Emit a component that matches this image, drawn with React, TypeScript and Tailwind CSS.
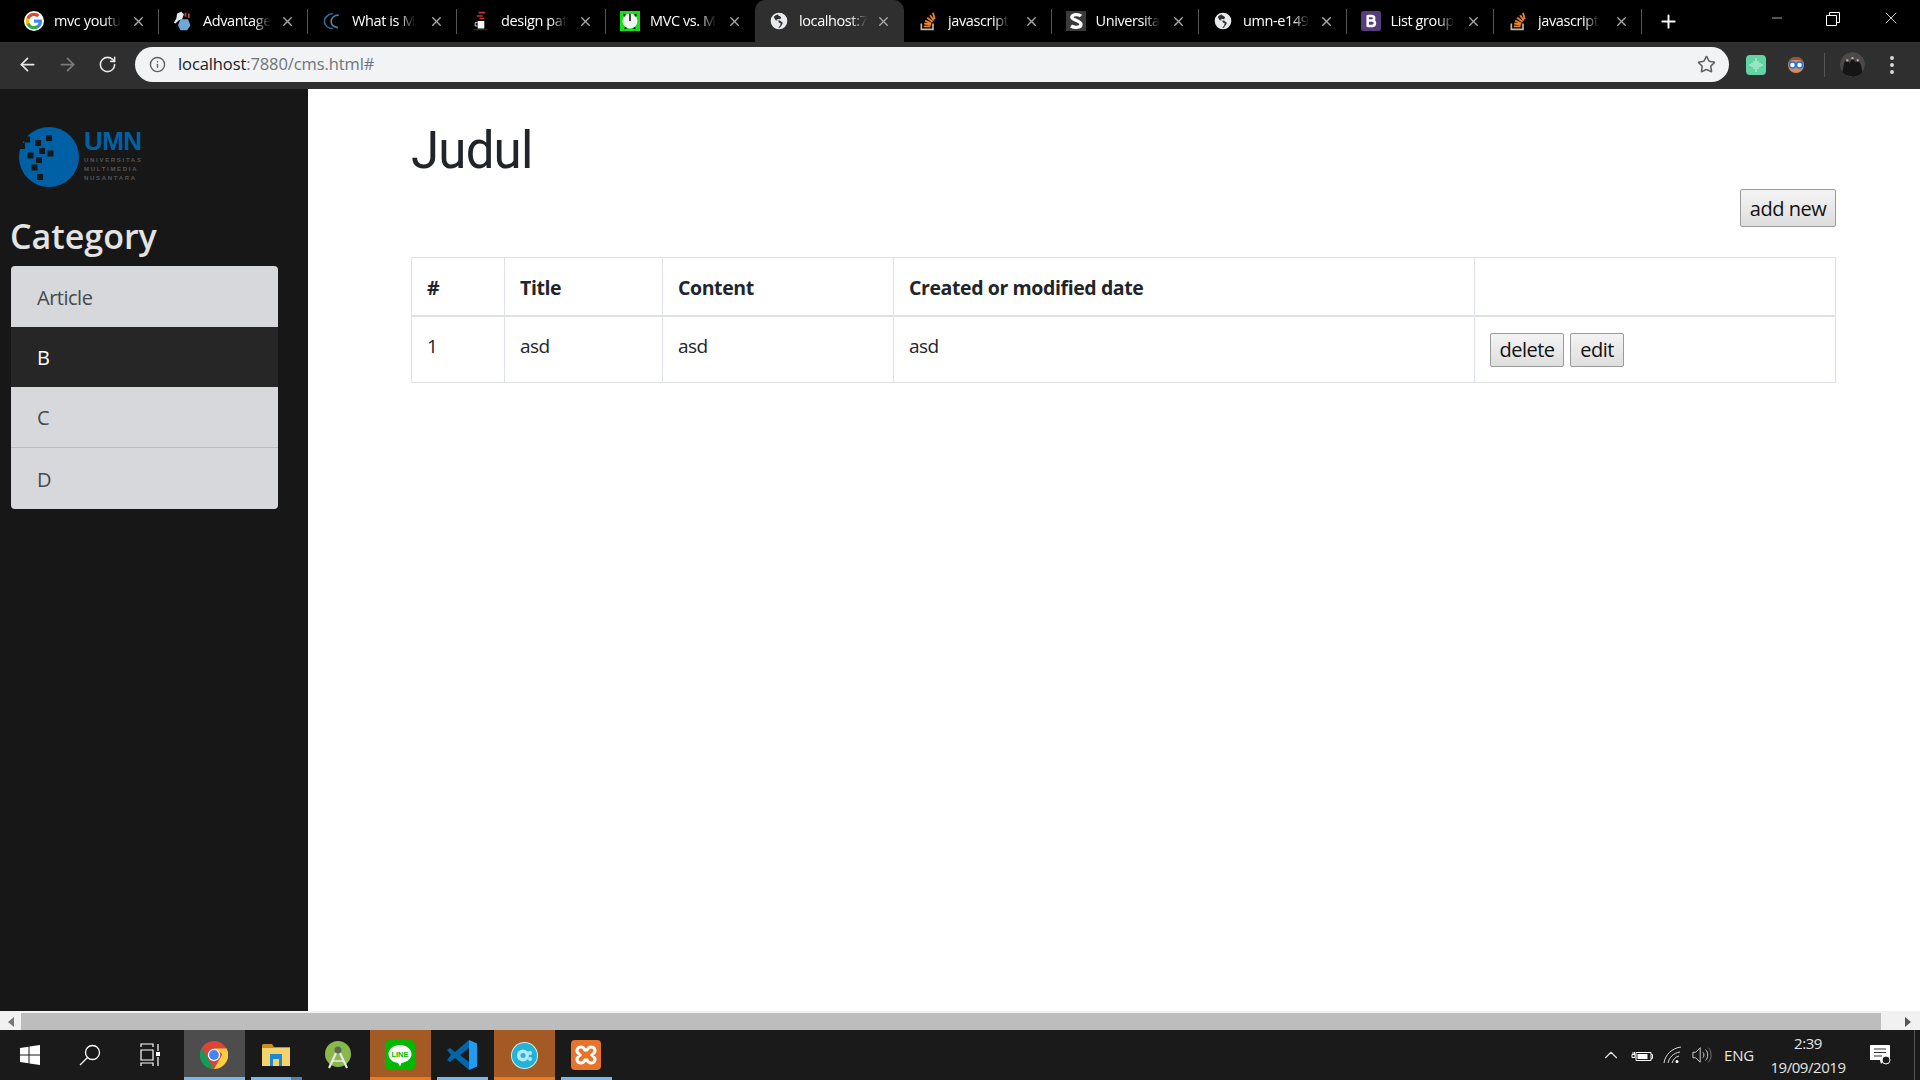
import { ArrowLeft, ArrowRight, ChevronUp, Info, Minus, Plus, RotateCw, Star, X } from "lucide-react";

const FONT = "font-['Open_Sans','Noto_Sans',sans-serif]";

function GoogleIcon() {
  return (
    <svg viewBox="0 0 24 24" className="w-5 h-5 rounded-full bg-white">
      <path fill="#4285F4" d="M21.6 12.2c0-.7-.1-1.4-.2-2H12v3.900h5.400c-.2 1.200-.9 2.300-2 3v2.500h3.200c1.900-1.800 3-4.400 3-7.400z" />
      <path fill="#34A853" d="M12 22c2.700 0 5-.9 6.600-2.400l-3.200-2.500c-.9.600-2 1-3.400 1-2.600 0-4.800-1.800-5.600-4.100H3.100v2.600C4.800 19.800 8.100 22 12 22z" />
      <path fill="#FBBC05" d="M6.400 14c-.2-.6-.3-1.300-.3-2s.1-1.400.3-2V7.400H3.100C2.400 8.800 2 10.300 2 12s.4 3.200 1.100 4.600L6.400 14z" />
      <path fill="#EA4335" d="M12 6c1.500 0 2.800.5 3.800 1.500l2.900-2.900C17 3 14.700 2 12 2 8.100 2 4.800 4.200 3.100 7.400L6.400 10C7.200 7.700 9.400 6 12 6z" />
    </svg>
  );
}

function AdvantageIcon() {
  return (
    <svg viewBox="0 0 24 24" className="w-5 h-5">
      <path fill="#dfe9f2" d="M5 3l5-2 3 3-2 6-4 1-4 4-2-1 3-5z" />
      <path fill="#6fa8d8" d="M9 10h9l3 7-4 6H9l-3-6z" />
      <path fill="#c9503f" d="M14 2h2v5h-2zM18 3h2v5h-2z" />
    </svg>
  );
}

function CrescentIcon() {
  return (
    <svg viewBox="0 0 24 24" className="w-5 h-5" fill="none" stroke="#3d6b94" strokeWidth="2">
      <path d="M13 3C6 4 2 9 3 14c1 4 5 7 10 7" />
      <path stroke="#5b7f9f" d="M20 5c-5 0-9 3-9 8 0 4 3 6 8 7" />
    </svg>
  );
}

function JavaIcon() {
  return (
    <svg viewBox="0 0 24 24" className="w-5 h-5">
      <path fill="#d0312d" d="M9 1h8v2H9zM7 5h7v2H7zM10 8h6v2h-6z" />
      <path fill="#f5f5f5" d="M8 12h8v9H8z" />
      <path fill="none" stroke="#f5f5f5" d="M8 14H5v4h3" />
      <path fill="#444" d="M3 22h17v1H3z" />
    </svg>
  );
}

function MvcIcon() {
  return (
    <svg viewBox="0 0 24 24" className="w-5 h-5 bg-[#16e016]">
      <circle cx="12" cy="12" r="9" fill="#f2f2f2" />
      <path fill="#222" d="M11 3h2v9h-2zM4 3l3 1-1 3-2-1zM20 3l-3 1 1 3 2-1zM6 19l3 2-4 1zM18 19l-3 2 4 1z" />
    </svg>
  );
}

function GlobeIcon() {
  return (
    <svg viewBox="0 0 24 24" className="w-5 h-5">
      <circle cx="12" cy="12" r="10" fill="#e8eaed" />
      <path fill="#2f2f2f" d="M11 4.200c-2 .2-4 1.300-5.300 3L8 11l3 .8 1 2.200 2 .5-.5 3-2.500 2.600h2c1.200-2 3.500-4 3.500-6.100l-3.500-2.500-3 .5-1-1.500 2-1 2.500.5 1-2.500c-.8-1-1.700-1.700-3.500-2.200z" />
    </svg>
  );
}

function StackIcon() {
  return (
    <svg viewBox="0 0 24 24" className="w-5 h-5" fill="none">
      <path stroke="#bcbbbb" strokeWidth="2" d="M4 15v7h14v-7" />
      <path stroke="#f48024" strokeWidth="2.200" d="M7 18.500h8M7.500 15l8 1.200M8.500 11.500l7.500 3.500M11 8l6.500 5M14.500 5l4.500 6.500M18 2l2 7.500" />
    </svg>
  );
}

function SIcon() {
  return (
    <svg viewBox="0 0 24 24" className="w-5 h-5 bg-[#3a3a3a]">
      <path fill="none" stroke="#fff" strokeWidth="4" d="M18 6c-2-2-10-3-11 1s11 4 11 9-9 4-12 2" />
    </svg>
  );
}

function BootstrapIcon() {
  return (
    <svg viewBox="0 0 24 24" className="w-5 h-5">
      <rect width="24" height="24" rx="3" fill="#563d7c" />
      <path fill="none" stroke="#fff" strokeWidth="3" d="M8 5v14M8 6h4.500c4.500 0 4.500 5.500 0 5.500H8M8 11.500h5c5 0 5 6.500 0 6.500H8" />
    </svg>
  );
}

const tabs = [
  { title: "mvc youtu", icon: <GoogleIcon /> },
  { title: "Advantage", icon: <AdvantageIcon /> },
  { title: "What is M", icon: <CrescentIcon /> },
  { title: "design pat", icon: <JavaIcon /> },
  { title: "MVC vs. M", icon: <MvcIcon /> },
  { title: "localhost:7", icon: <GlobeIcon />, active: true },
  { title: "javascript", icon: <StackIcon /> },
  { title: "Universita", icon: <SIcon /> },
  { title: "umn-e149", icon: <GlobeIcon /> },
  { title: "List group", icon: <BootstrapIcon /> },
  { title: "javascript", icon: <StackIcon /> },
];

function TabBar() {
  return (
    <div className="flex h-[42px] items-stretch bg-black pl-[10px] text-white">
      {tabs.map((tab, i) => (
        <div
          key={i}
          className={`relative flex shrink-0 items-center pl-[14px] pr-[13px] ${i < 6 ? "w-[149px]" : "w-[147.5px]"} ${
            tab.active ? "rounded-t-[10px] bg-[#2f2f2f]" : ""
          }`}
        >
          <span className="flex w-5 shrink-0 items-center justify-center">{tab.icon}</span>
          <span className="ml-[10px] whitespace-nowrap text-[14.5px] tracking-[-0.4px] [mask-image:linear-gradient(to_right,black_75%,transparent)]">
            {tab.title}
          </span>
          <X className="ml-auto h-[15px] w-[15px] text-[#a9a9a9]" strokeWidth={2.2} />
          {!tab.active && tabs[i + 1] && !tabs[i + 1].active && (
            <span className="absolute right-0 top-[9px] h-[25px] w-px bg-[#555]" />
          )}
          {i === tabs.length - 1 && <span className="absolute right-0 top-[9px] h-[25px] w-px bg-[#555]" />}
        </div>
      ))}
      <div className="ml-[16px] flex items-center">
        <Plus className="h-[21px] w-[21px] text-white" strokeWidth={2.2} />
      </div>
      <div className="ml-auto flex items-start">
        <span className="flex h-[36px] w-[58px] items-center justify-center">
          <Minus className="h-4 w-4 text-white" strokeWidth={1} />
        </span>
        <svg viewBox="0 0 14 14" className="ml-[20px] mt-[12px] h-[14px] w-[14px]" fill="none" stroke="#fff">
          <path d="M.5 3.500h10v10H.5zM3.500 3.500v-3h10v10h-3" />
        </svg>
        <span className="ml-[39px] mr-[17px] flex h-[36px] w-[24px] items-center justify-center">
          <X className="h-[20px] w-[20px] text-white" strokeWidth={1} />
        </span>
      </div>
    </div>
  );
}

function Toolbar() {
  return (
    <div className="flex h-[47px] items-center bg-[#2f2f2f] pb-[4px] pt-[2px]">
      <ArrowLeft className="ml-[17px] h-[21px] w-[21px] text-[#e6e6e6]" strokeWidth={2} />
      <ArrowRight className="ml-[19px] h-[21px] w-[21px] text-[#7a7a7a]" strokeWidth={2} />
      <RotateCw className="ml-[20px] h-[19px] w-[19px] text-[#e6e6e6]" strokeWidth={2} />
      <div className="ml-[18px] flex h-[35px] w-[1594px] items-center rounded-full bg-[#f1f3f4] pl-[14px] pr-[13px]">
        <Info className="h-[17px] w-[17px] text-[#5f6368]" strokeWidth={2} />
        <span className="ml-[12px] text-[16.5px] tracking-[-0.1px] text-[#202124]">
          localhost<span className="text-[#70757a]">:7880/cms.html#</span>
        </span>
        <Star className="ml-auto h-[19px] w-[19px] text-[#5f6368]" strokeWidth={2} />
      </div>
      <svg viewBox="0 0 20 20" className="ml-[17px] h-5 w-5">
        <rect width="20" height="20" rx="4" fill="#62d3a3" />
        <path stroke="#c9f3e0" d="M4 9v2M6 8v4M8 6v8M10 3v14M12 6v8M14 8v4M16 9v2" />
      </svg>
      <svg viewBox="0 0 20 20" className="ml-[20px] h-5 w-5">
        <circle cx="10" cy="10" r="8" fill="#d98a5f" />
        <path fill="#8a5a3a" d="M3 8c0-8 14-8 14 0l-3-3H6z" />
        <circle cx="6.500" cy="10" r="3" fill="#fff" stroke="#1a73e8" strokeWidth="1.500" />
        <circle cx="13.500" cy="10" r="3" fill="#fff" stroke="#1a73e8" strokeWidth="1.500" />
      </svg>
      <span className="ml-[18px] h-[24px] w-px bg-[#555]" />
      <svg viewBox="0 0 24 24" className="ml-[15px] h-[25px] w-[25px] rounded-full">
        <circle cx="12" cy="12" r="12" fill="#4a4a4a" />
        <path fill="#151515" d="M2 21l2-11 3-3 2 4 3-5 3 4 2-3 3 5 2 9-9 3z" />
        <path fill="#d8b8a8" d="M6 7h2v2H6zM11 5h2v2h-2zM16 7h2v2h-2z" />
      </svg>
      <span className="ml-[25px] flex h-[18px] w-[4px] flex-col justify-between">
        <span className="h-1 w-1 rounded-full bg-[#d5d5d5]" />
        <span className="h-1 w-1 rounded-full bg-[#d5d5d5]" />
        <span className="h-1 w-1 rounded-full bg-[#d5d5d5]" />
      </span>
    </div>
  );
}

function UmnLogo() {
  const holes = [
    [30, 11],
    [19, 16],
    [23, 24],
    [31.5, 26.5],
    [11.5, 28.5],
    [20, 33],
    [15.5, 40.5],
    [21, 50],
    [8, 12.500],
    [3, 19],
  ];
  return (
    <div className="flex items-center">
      <svg viewBox="0 0 60 60" className="h-[60px] w-[60px] shrink-0">
        <circle cx="30" cy="30" r="30" fill="#0060a5" />
        {holes.map(([x, y], i) => (
          <rect key={i} x={x - 3} y={y - 3} width="6" height="6" fill="#171717" />
        ))}
      </svg>
      <div className="ml-[5px] flex flex-col font-['Liberation_Sans',sans-serif] text-[#555]">
        <span className="text-[26px] font-bold leading-[20px] tracking-[-0.6px] text-[#0060a5]">UMN</span>
        <span className="mt-[5px] text-[6px] font-bold leading-[9px] tracking-[1.7px]">UNIVERSITAS</span>
        <span className="text-[6px] font-bold leading-[9px] tracking-[1.7px]">MULTIMEDIA</span>
        <span className="text-[6px] font-bold leading-[9px] tracking-[1.7px]">NUSANTARA</span>
      </div>
    </div>
  );
}

function Sidebar() {
  const rows = [
    { label: "Article", cls: "h-[61px] rounded-t-[4px] bg-[#d6d8db] text-[#464a4e]" },
    { label: "B", cls: "h-[60px] bg-[#262626] text-white font-medium" },
    { label: "C", cls: "h-[61px] border-b border-[#b9bbbe] bg-[#d6d8db] text-[#464a4e]" },
    { label: "D", cls: "h-[61px] rounded-b-[4px] bg-[#d6d8db] text-[#464a4e]" },
  ];
  return (
    <aside className="w-[308px] shrink-0 bg-[#171717] pl-[11px] pt-[38px]">
      <div className="pl-[8px]">
        <UmnLogo />
      </div>
      <h2 className="-ml-px mt-[26px] text-[34px] font-semibold leading-[47px] text-[#e4e4e4]">Category</h2>
      <div className="mt-[6px] w-[267px] overflow-hidden">
        {rows.map((row) => (
          <div key={row.label} className={`flex items-center pl-[26px] pt-[2px] text-[20px] tracking-[-0.5px] ${row.cls}`}>
            {row.label}
          </div>
        ))}
      </div>
    </aside>
  );
}

function GrayButton({ label, cls }: { label: string; cls: string }) {
  return (
    <button className={`rounded-[2px] border border-[#9a9a9a] bg-gradient-to-b from-[#f4f4f4] to-[#dedede] text-[20px] tracking-[-0.5px] text-[#111] ${cls}`}>
      {label}
    </button>
  );
}

function Main() {
  const th = "border border-[#dee2e6] border-b-2 px-[15px] pt-[2px] text-left text-[19.5px] font-bold tracking-[-0.4px] text-[#212529]";
  const td = "border border-[#dee2e6] px-[15px] pb-[6px] text-[19px] tracking-[-0.5px] text-[#212529] align-middle";
  return (
    <main className="min-w-0 flex-1 bg-white pl-[103px] pr-[84px] pt-[32px]">
      <h1 className="font-['Roboto',sans-serif] text-[51px] font-[450] leading-[60px] tracking-[-0.8px] text-[#212529]">Judul</h1>
      <div className="mt-[8px] flex justify-end">
        <GrayButton label="add new" cls="h-[38px] w-[96px] pt-px" />
      </div>
      <table className="mt-[30px] w-[1424px] table-fixed border-collapse">
        <colgroup>
          <col className="w-[93px]" />
          <col className="w-[158px]" />
          <col className="w-[231px]" />
          <col className="w-[581px]" />
          <col className="w-[361px]" />
        </colgroup>
        <thead>
          <tr className="h-[58px]">
            <th className={th}>#</th>
            <th className={th}>Title</th>
            <th className={th}>Content</th>
            <th className={th}>Created or modified date</th>
            <th className={th}></th>
          </tr>
        </thead>
        <tbody>
          <tr className="h-[67px]">
            <td className={td}>1</td>
            <td className={td}>asd</td>
            <td className={td}>asd</td>
            <td className={td}>asd</td>
            <td className={td}>
              <div className="flex gap-[6px] pt-[7px]">
                <GrayButton label="delete" cls="h-[34px] w-[74px]" />
                <GrayButton label="edit" cls="h-[34px] w-[54px]" />
              </div>
            </td>
          </tr>
        </tbody>
      </table>
    </main>
  );
}

function ScrollBar() {
  return (
    <div className="flex h-[19px] items-stretch border-t-2 border-[#f1f1f1] bg-[#f1f1f1]">
      <div className="flex w-[21px] items-center justify-center">
        <span className="h-0 w-0 border-y-[5px] border-r-[6px] border-y-transparent border-r-[#777]" />
      </div>
      <div className="flex-1 bg-[#bdbdbd]" />
      <div className="flex w-[39px] items-center justify-end pr-[9px]">
        <span className="h-0 w-0 border-y-[5px] border-l-[6px] border-y-transparent border-l-[#555]" />
      </div>
    </div>
  );
}

function TaskIcon({ children, cls = "", line = "" }: { children: React.ReactNode; cls?: string; line?: string }) {
  return (
    <div className={`relative flex h-[50px] items-center justify-center ${cls}`}>
      {children}
      {line && <span className={`absolute inset-x-0 bottom-0 h-[3px] ${line}`} />}
    </div>
  );
}

function Taskbar() {
  return (
    <div className="flex h-[50px] items-center bg-[#1a1a1a] text-white">
      <div className="flex h-[50px] w-[60px] items-center justify-center">
        <svg viewBox="0 0 20 20" className="h-5 w-5" fill="#fff">
          <path d="M0 3l8.500-1.200v7.700H0zM9.500 1.600L20 0v9.500H9.500zM0 10.500h8.500v7.700L0 17zM9.500 10.500H20V20L9.500 18.400z" />
        </svg>
      </div>
      <div className="flex h-[50px] w-[60px] items-center justify-center">
        <svg viewBox="0 0 22 22" className="h-[22px] w-[22px]" fill="none" stroke="#fff" strokeWidth="1.300">
          <circle cx="13.500" cy="8.500" r="7" />
          <path d="M8.500 13.500L1 21" />
        </svg>
      </div>
      <div className="flex h-[50px] w-[60px] items-center justify-center">
        <svg viewBox="0 0 20 24" className="h-6 w-5" fill="none" stroke="#fff" strokeWidth="1.200">
          <path d="M1 4V1h12v3M1 7h12v10H1zM1 23v-3h12v3M18 1v7M18 14v9" />
          <rect x="16" y="9" width="4" height="4" fill="#fff" stroke="none" />
        </svg>
      </div>
      <TaskIcon cls="ml-[4px] w-[61px] bg-[#4d4d4d]" line="bg-[#76b9ed]">
        <svg viewBox="0 0 24 24" className="-ml-[2px] h-7 w-7">
          <circle cx="12" cy="12" r="12" fill="#db4437" />
          <path fill="#0f9d58" d="M12 24A12 12 0 0 1 1.600 6l6 10.500z" />
          <path fill="#ffcd40" d="M12 24l6-10.400-.1-.1L22.400 6A12 12 0 0 1 12 24z" />
          <path fill="#ffcd40" d="M12 6.500h10.400a12 12 0 0 1 0 11L18 10z" />
          <circle cx="12" cy="12" r="5.300" fill="#fff" />
          <circle cx="12" cy="12" r="4.200" fill="#4285f4" />
        </svg>
      </TaskIcon>
      <TaskIcon cls="ml-[6px] w-[51px]">
        <svg viewBox="0 0 28 22" className="-ml-[2px] h-[22px] w-7">
          <path fill="#c98f1c" d="M0 1.500Q0 0 1.500 0H10l2 3h16v4H0z" />
          <path fill="#f4d36c" d="M0 4h28v18H0z" />
          <path fill="#1e88d8" d="M8 10h12v12h-3v-7h-6v7H8z" />
        </svg>
        <span className="absolute bottom-0 left-0 h-[3px] w-[40px] bg-[#76b9ed]" />
        <span className="absolute bottom-0 right-0 h-[3px] w-[11px] bg-[#4a86b0]" />
      </TaskIcon>
      <TaskIcon cls="ml-[6px] w-[62px]">
        <svg viewBox="0 0 26 28" className="-ml-[2px] h-7 w-[26px]">
          <circle cx="13" cy="13" r="13" fill="#8bb84b" />
          <path fill="none" stroke="#e8e8e8" strokeWidth="2.200" d="M12 10L4 27M14 10l8 17" />
          <circle cx="13" cy="9" r="3.500" fill="#5a6b52" />
          <path stroke="#e8e8e8" strokeWidth="1.500" d="M7 20h12" />
        </svg>
      </TaskIcon>
      <TaskIcon cls="w-[61px] bg-[#a35a24]" line="bg-[#f07818]">
        <svg viewBox="0 0 30 30" className="-ml-[2px] h-[30px] w-[30px]">
          <rect width="30" height="30" rx="5" fill="#00b900" />
          <path fill="#fff" d="M15 5C8.500 5 3.500 9 3.500 14s4 8.300 9.500 9l2 3.500 1.500-3.500c6-1 10-4.500 10-9 0-5-5-9-11.500-9z" />
          <text x="15" y="17" textAnchor="middle" fontSize="7.500" fontWeight="700" fill="#00b900" fontFamily="Liberation Sans">LINE</text>
        </svg>
      </TaskIcon>
      <TaskIcon cls="ml-[6px] w-[51px]" line="bg-[#76b9ed]">
        <svg viewBox="0 0 30 30" className="-ml-[2px] h-[30px] w-[30px]">
          <path fill="#0065a9" d="M0 10l3-2 5 4 14-12v8l-9 7 9 7v8L8 18l-5 4-3-2 4-5z" />
          <path fill="#1f9cf0" d="M22 0l8 3.500v23L22 30z" />
        </svg>
      </TaskIcon>
      <TaskIcon cls="ml-[6px] w-[61px] bg-[#a35a24]" line="bg-[#f07818]">
        <svg viewBox="0 0 27 27" className="h-[27px] w-[27px]">
          <circle cx="13.500" cy="13.500" r="13.500" fill="#d9e7ee" />
          <circle cx="13.500" cy="13.500" r="12.500" fill="#1fb4d8" />
          <circle cx="12" cy="13.500" r="6" fill="#b8e6f2" />
          <circle cx="12" cy="13.500" r="2.500" fill="#1fb4d8" />
          <circle cx="19" cy="11" r="2" fill="#b8e6f2" />
          <circle cx="19" cy="17" r="2" fill="#b8e6f2" />
        </svg>
      </TaskIcon>
      <TaskIcon cls="ml-[6px] w-[51px]" line="bg-[#76b9ed]">
        <svg viewBox="0 0 30 30" className="-ml-[2px] h-[30px] w-[30px]">
          <rect width="30" height="30" rx="4" fill="#e8742c" />
          <path fill="none" stroke="#fff" strokeWidth="3" d="M10 7c-4 0-5 4-3 6l2 2-2 2c-2 2-1 6 3 6 2 0 3-1 4-3h2c1 2 2 3 4 3 4 0 5-4 3-6l-2-2 2-2c2-2 1-6-3-6-2 0-3 1-4 3h-2c-1-2-2-3-4-3z" />
        </svg>
      </TaskIcon>
      <div className="ml-auto flex h-[50px] items-center text-[#e6e6e6]">
        <ChevronUp className="h-[22px] w-[22px]" strokeWidth={1.2} />
        <svg viewBox="0 0 22 14" className="ml-[9px] h-[14px] w-[22px]" fill="none" stroke="#fff">
          <path d="M5 4.500h15v8H5zM20 6.500h1.500v4H20M1 6.500h3v3H1zM2 4v2M3.500 4v2" />
          <rect x="6.500" y="6" width="10" height="5" fill="#fff" stroke="none" />
        </svg>
        <svg viewBox="0 0 20 18" className="ml-[10px] h-[18px] w-5" fill="none" stroke="#ddd">
          <path d="M1 17C2 9 9 2 18 1M5 17c1-5 5-10 12-11M9 17c1-3 3-6 7-7" />
          <circle cx="14" cy="15.500" r="1.500" fill="#fff" stroke="none" />
        </svg>
        <svg viewBox="0 0 22 20" className="ml-[9px] h-5 w-[20px]" fill="none" stroke="#ddd">
          <path d="M1 7h3l5-5v16l-5-5H1zM12 7c1.500 1.500 1.500 4.500 0 6M15 4c3 3 3 9 0 12" />
          <path stroke="#777" d="M18 2c4 4 4 12 0 16" />
        </svg>
        <span className="ml-[12px] text-[15px] tracking-[-0.2px]">ENG</span>
        <div className="ml-[16px] flex w-[76px] flex-col items-center text-[15px] leading-[24px] tracking-[-0.45px]">
          <span>2:39</span>
          <span>19/09/2019</span>
        </div>
        <svg viewBox="0 0 22 22" className="ml-[23px] h-[22px] w-[22px]">
          <path fill="#fff" d="M1 1h20v15h-6l-3 4-1-4H1z" />
          <path stroke="#333" strokeWidth="1.200" d="M5 5h12M5 8.500h12M5 12h8" />
          <circle cx="17" cy="16" r="4" fill="#1a1a1a" stroke="#fff" />
        </svg>
        <span className="ml-[23px] mr-[5px] h-[50px] w-px bg-[#555]" />
      </div>
    </div>
  );
}

export default function App() {
  return (
    <div className={`flex h-screen w-[1920px] flex-col overflow-hidden bg-white ${FONT}`}>
      <TabBar />
      <Toolbar />
      <div className="flex min-h-0 flex-1">
        <Sidebar />
        <Main />
      </div>
      <ScrollBar />
      <Taskbar />
    </div>
  );
}
